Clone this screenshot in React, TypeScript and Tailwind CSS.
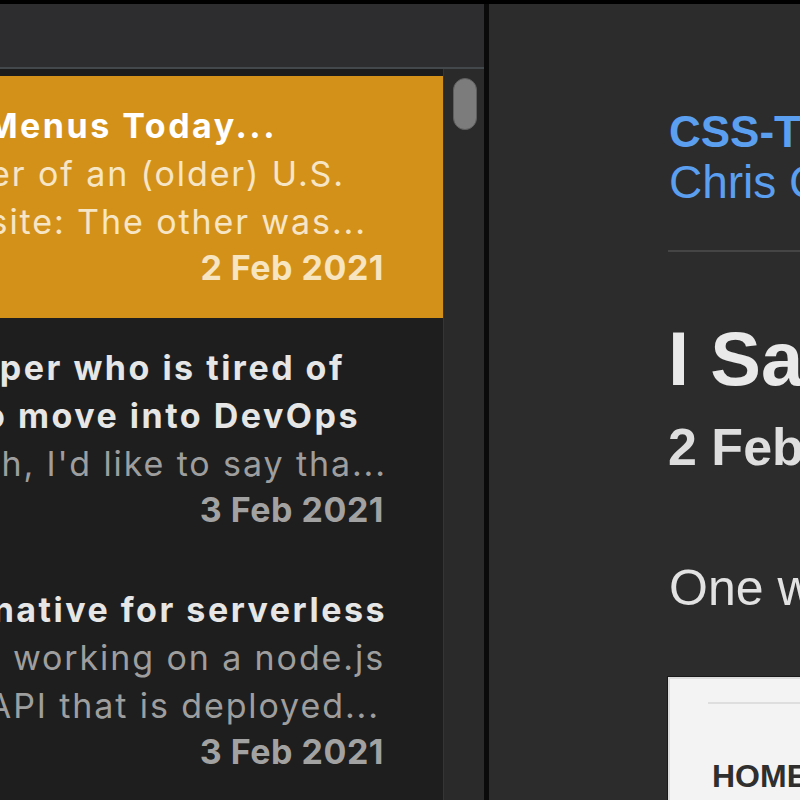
import React from "react";

type Line = { text: string; pad: string; kind: "title" | "body" };
type Row = { selected: boolean; lines: Line[]; date: string };

const rows: Row[] = [
  {
    selected: true,
    lines: [
      { text: "Two Mega Menus Today...", pad: "pr-[166px]", kind: "title" },
      { text: "a header of an (older) U.S.", pad: "pr-[98px]", kind: "body" },
      { text: "website: The other was...", pad: "pr-[76px]", kind: "body" },
    ],
    date: "2 Feb 2021",
  },
  {
    selected: false,
    lines: [
      { text: "a developer who is tired of", pad: "pr-[98px]", kind: "title" },
      { text: "and wants to move into DevOps", pad: "pr-[83px]", kind: "title" },
      { text: "truth, I'd like to say tha...", pad: "pr-[56px]", kind: "body" },
    ],
    date: "3 Feb 2021",
  },
  {
    selected: false,
    lines: [
      { text: "An alternative for serverless", pad: "pr-[56px]", kind: "title" },
      { text: "working on a node.js", pad: "pr-[58px]", kind: "body" },
      { text: "an API that is deployed...", pad: "pr-[63px]", kind: "body" },
    ],
    date: "3 Feb 2021",
  },
];

function TimelineRow({ row }: { row: Row }) {
  const sel = row.selected;
  return (
    <div
      className={
        "flex flex-col h-[242px] pt-[26px] shrink-0 " +
        (sel ? "bg-[#d3911a]" : "bg-[#1e1e1e]")
      }
    >
      {row.lines.map((l, i) => (
        <div key={i} className={"flex justify-end h-[48px] items-center " + l.pad}>
          <span
            className={
              "shrink-0 whitespace-nowrap text-[34px] leading-[48px] " +
              (l.kind === "title"
                ? sel
                  ? "font-bold tracking-[2.5px] text-white"
                  : "font-bold tracking-[2.5px] text-[#e6e6e6]"
                : sel
                ? "tracking-[1.9px] text-[#f7e6c6]"
                : "tracking-[1.9px] text-[#9e9e9e]")
            }
          >
            {l.text}
          </span>
        </div>
      ))}
      <div className="flex justify-end h-[44px] items-center pr-[59px]">
        <span
          className={
            "shrink-0 whitespace-nowrap text-[34px] leading-[44px] font-bold tracking-[0.5px] " +
            (sel ? "text-[#f7e4c0]" : "text-[#a2a2a2]")
          }
        >
          {row.date}
        </span>
      </div>
    </div>
  );
}

export default function App() {
  return (
    <div
      className="w-[800px] h-[800px] overflow-hidden bg-black pt-[4px] flex"
      style={{ fontFamily: "Inter, 'Noto Sans', sans-serif" }}
    >
      {/* Left: timeline */}
      <div className="w-[484px] flex flex-col shrink-0">
        <div className="h-[65px] bg-[#2d2d2f] border-b-2 border-[#43484c] shrink-0" />
        <div className="flex flex-1 min-h-0">
          <div className="w-[443px] bg-[#1c1c1c] pt-[7px] overflow-hidden flex flex-col shrink-0">
            {rows.map((r, i) => (
              <TimelineRow key={i} row={r} />
            ))}
          </div>
          <div className="flex-1 bg-[#2a2a2a] border-l border-[#353535] pt-[9px] pl-[9px]">
            <div className="w-[24px] h-[52px] rounded-full bg-[#7c7c7c] border border-[#5e5e5e]" />
          </div>
        </div>
      </div>

      {/* Divider */}
      <div className="w-[5px] bg-[#0a0a0a] shrink-0" />

      {/* Right: article */}
      <div
        className="flex-1 bg-[#2c2c2c] overflow-hidden pl-[179px] flex flex-col"
        style={{ fontFamily: "'Liberation Sans', Arial, sans-serif" }}
      >
        <div className="mt-[106px] text-[44px] leading-none font-bold text-[#5b9ff0] whitespace-nowrap pl-[1px]">
          CSS-Tricks
        </div>
        <div className="mt-[5px] text-[46px] leading-none text-[#5b9ff0] whitespace-nowrap pl-[1px]">
          Chris Coyier
        </div>
        <div className="mt-[45px] h-[2px] bg-[#454545] w-[400px] shrink-0" />
        <div className="mt-[69px] text-[76px] leading-none font-bold text-[#e9e9e9] whitespace-nowrap">
          I Saw Two Mega Menus Today
        </div>
        <div className="mt-[24px] text-[52px] leading-none font-bold text-[#dedede] whitespace-nowrap">
          2 Feb 2021
        </div>
        <div className="mt-[90px] text-[50px] leading-none text-[#e2e2e2] whitespace-nowrap pl-[1px]">
          One was a header
        </div>
        <div className="mt-[64px] w-[400px] h-[300px] shrink-0 bg-[#f3f3f3] border-2 border-[#dddddd] outline outline-1 outline-[#1a1a1a] pt-[23px]">
          <div className="ml-[38px] h-[2px] bg-[#dedede]" />
          <div className="mt-[56px] ml-[42px] text-[32px] leading-none font-bold text-[#2f2f2f] whitespace-nowrap">
            HOME
          </div>
        </div>
      </div>
    </div>
  );
}
